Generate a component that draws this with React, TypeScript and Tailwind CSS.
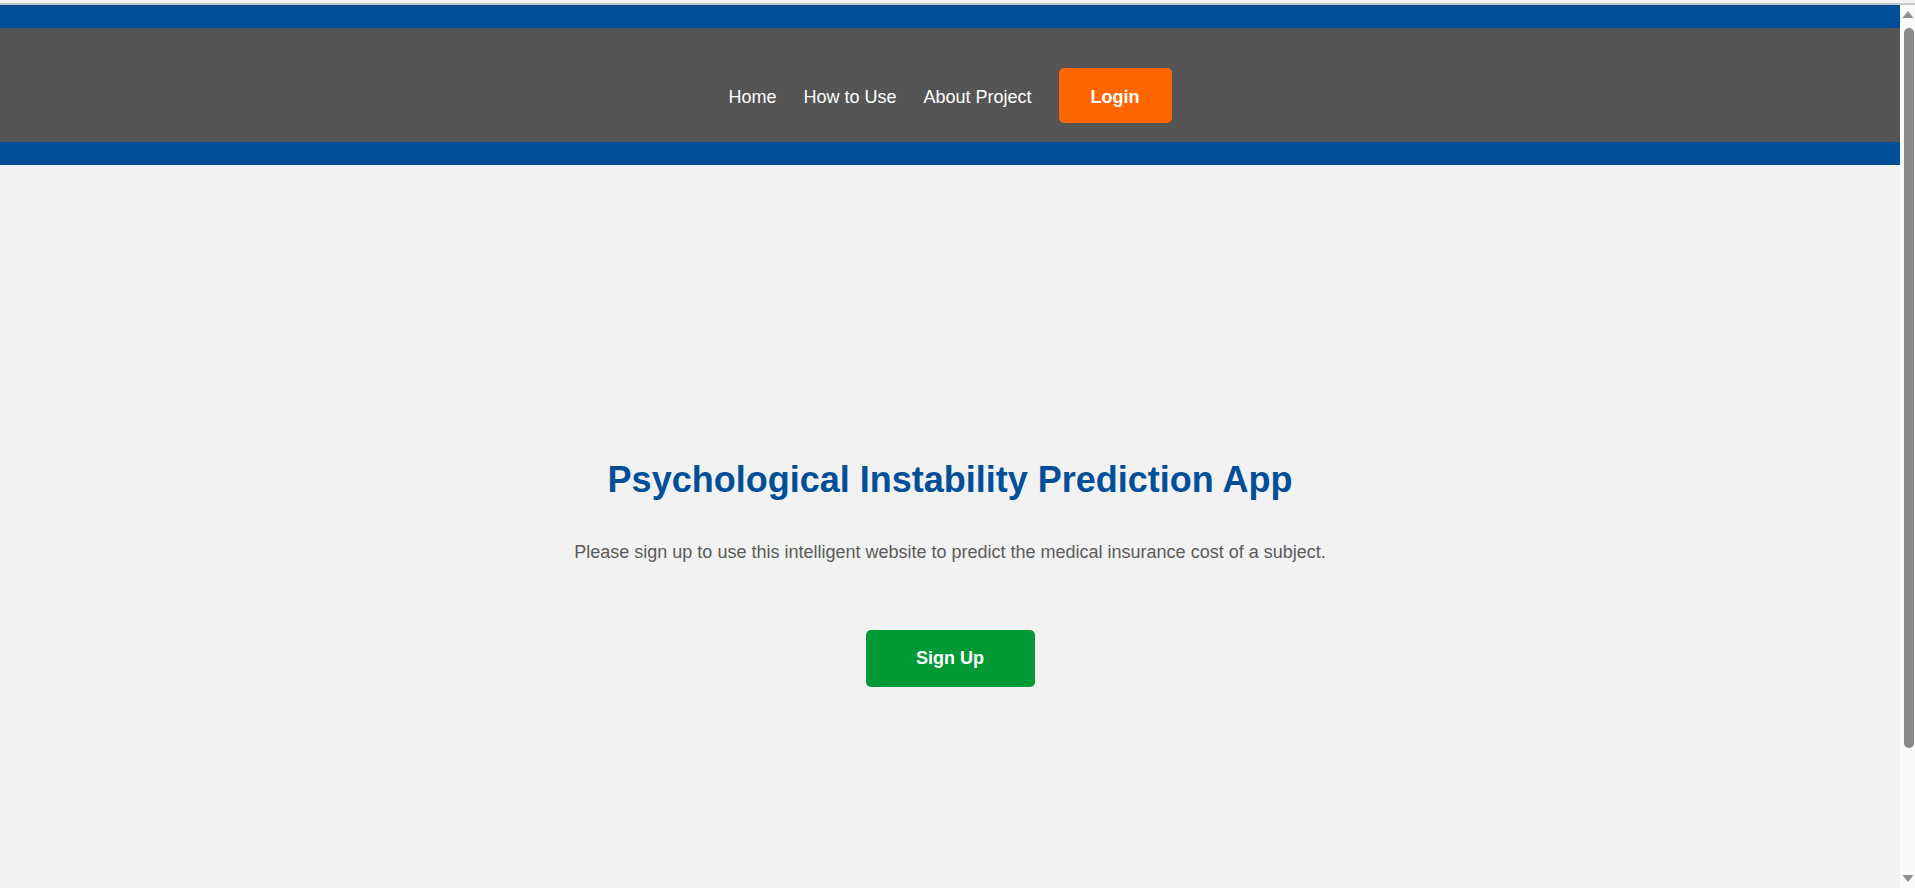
const NAV_LINKS = ['Home', 'How to Use', 'About Project'];

function Scrollbar() {
  return (
    <div className="w-[15px] shrink-0 bg-[#fafafa] flex flex-col items-center">
      <svg width="15" height="17" viewBox="0 0 15 17" className="shrink-0">
        <path d="M2.5 13 L8 6 L13.5 13 Z" fill="#8f8f8f" />
      </svg>
      <div className="w-[10px] h-[720px] mt-[6px] ml-[3px] rounded-full bg-[#8a8a8a]" />
      <div className="flex-1" />
      <svg width="15" height="17" viewBox="0 0 15 17" className="shrink-0">
        <path d="M2.5 4 L8 11 L13.5 4 Z" fill="#8f8f8f" />
      </svg>
    </div>
  );
}

export default function App() {
  return (
    <div className="h-[888px] overflow-hidden flex flex-col bg-[#f2f2f2] font-['Liberation_Sans',Arial,sans-serif]">
      {/* thin line at the very top */}
      <div className="h-[3px] shrink-0 bg-[#f2f2f2]" />
      <div className="h-[2px] shrink-0 bg-[#c6c6c6]" />

      <div className="flex flex-1 min-h-0">
        <div className="flex-1 flex flex-col">
          <header>
            <div className="h-[23px] bg-[#004f98]" />
            <nav className="h-[114px] bg-[#555555] flex justify-center items-center pt-[21px] gap-[27px]">
              {NAV_LINKS.map(l => (
                <a key={l} href="#" className="pt-[4px] text-white text-[18px] leading-[1.15]">
                  {l}
                </a>
              ))}
              <button className="w-[113px] h-[55px] pt-[3px] rounded-[5px] bg-[#ff6600] text-white font-bold text-[18px]">
                Login
              </button>
            </nav>
            <div className="h-[23px] bg-[#004f98]" />
          </header>

          <main className="flex flex-col items-center pt-[294px]">
            <h1 className="text-[36px] leading-[1.15] font-bold text-[#004f98]">
              Psychological Instability Prediction App
            </h1>
            <p className="mt-[42px] text-[18px] leading-[1.15] text-[#5a5a5a]">
              Please sign up to use this intelligent website to predict the medical insurance cost of a subject.
            </p>
            <button className="mt-[67px] w-[169px] h-[57px] rounded-[5px] bg-[#009933] text-white font-bold text-[18px]">
              Sign Up
            </button>
          </main>
        </div>

        <Scrollbar />
      </div>
    </div>
  );
}
